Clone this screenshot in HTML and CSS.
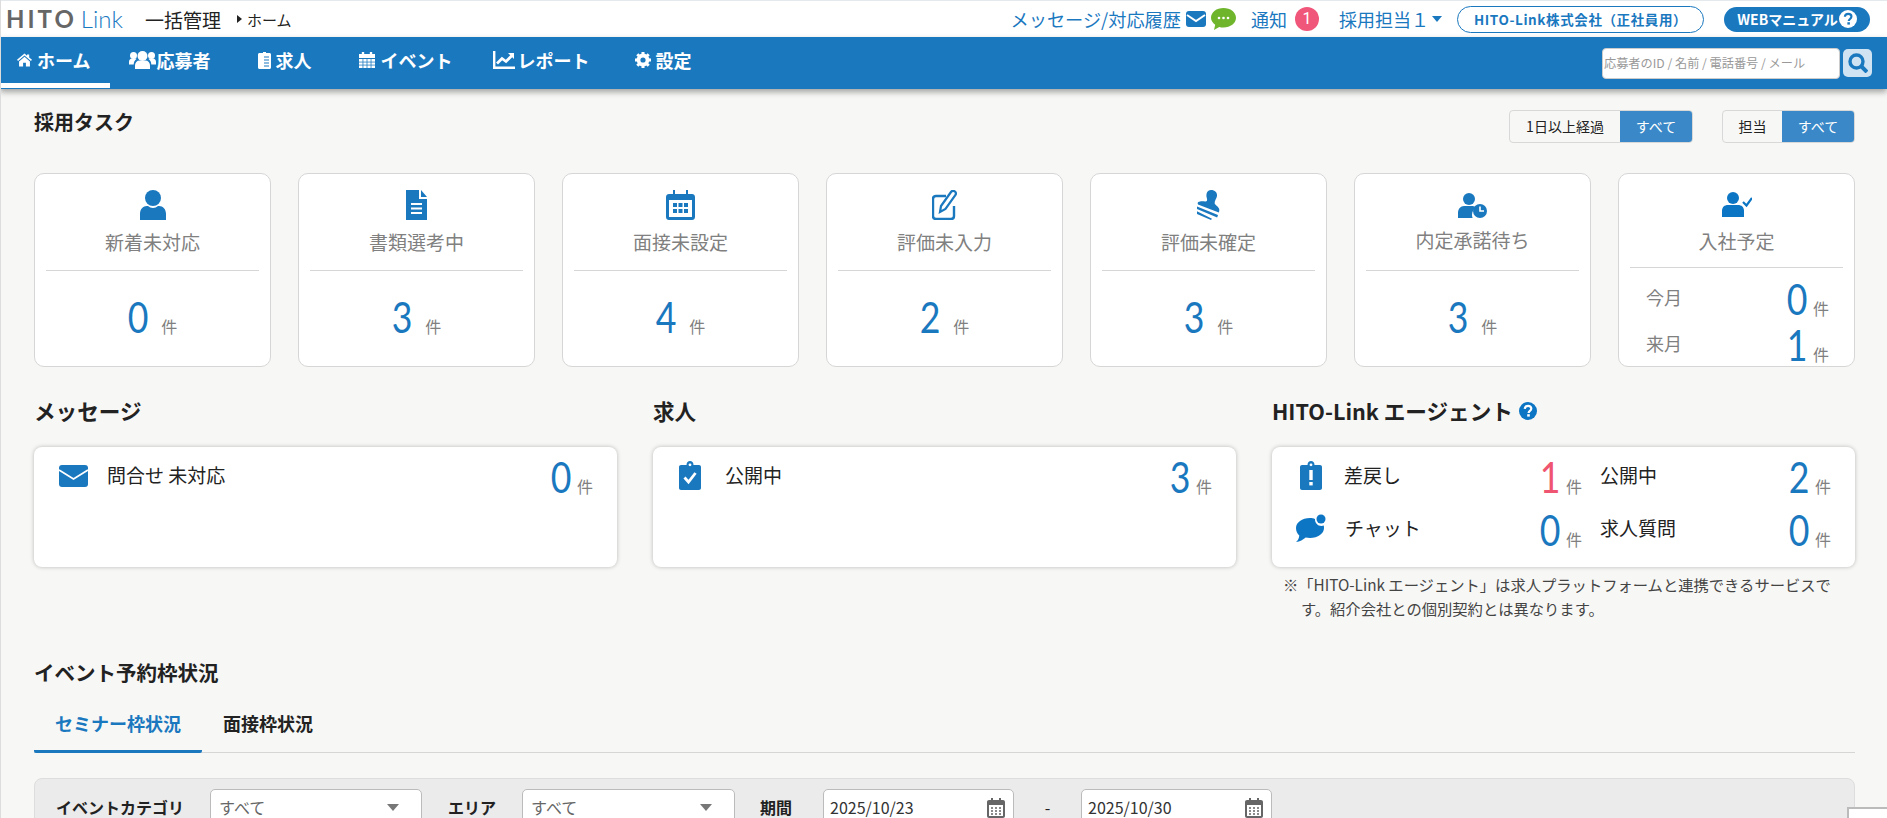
FILE: index.html
```html
<!DOCTYPE html>
<html lang="ja">
<head>
<meta charset="utf-8">
<title>HITO-Link</title>
<link rel="stylesheet" href="styles.css">
</head>
<body>
<header class="topbar">
  <div class="top-left">
    <div class="logo"><span class="logo-hito">HITO</span><span class="logo-link">Link</span></div>
    <div class="top-title">一括管理</div>
    <div class="crumb"><span class="crumb-caret"></span>ホーム</div>
  </div>
  <div class="top-right">
    <span class="top-link msg">メッセージ/対応履歴</span>
    <svg class="i-topmail" viewBox="0 0 20 16"><rect width="20" height="16" rx="3" fill="#1a78bf"/><path d="M1 4l9 6 9-6" fill="none" stroke="#fff" stroke-width="2"/></svg>
    <svg class="i-topchat" viewBox="0 0 25 22"><path d="M12.500 0C19.400 0 25 4.200 25 9.800S19.400 19.500 12.500 19.500c-1.500 0-3-.2-4.300-.6L3 22l1.200-5.300C1.600 15 0 12.600 0 9.800 0 4.200 5.600 0 12.500 0z" fill="#6fb52c"/><circle cx="8" cy="10" r="1.300" fill="#fff"/><circle cx="12.500" cy="10" r="1.300" fill="#fff"/><circle cx="17" cy="10" r="1.300" fill="#fff"/></svg>
    <span class="top-link notice">通知</span>
    <span class="badge">1</span>
    <span class="top-link user">採用担当１</span>
    <span class="user-caret"></span>
    <span class="company">HITO-Link株式会社（正社員用）</span>
    <span class="manual">WEBマニュアル<svg class="i-help" viewBox="0 0 20 20"><circle cx="10" cy="10" r="10" fill="#fff"/><path d="M6.500 7.500C6.700 5.500 8.200 4.300 10.200 4.300c2.100 0 3.600 1.200 3.600 3 0 2.700-3 2.600-3 5" fill="none" stroke="#1a78bf" stroke-width="2.400"/><rect x="9.300" y="13.600" width="2.800" height="2.600" fill="#1a78bf"/></svg></span>
  </div>
</header>

<nav class="nav">
  <div class="nav-items">
    <a class="nav-item active"><svg class="i-home" viewBox="0 0 16 14"><path d="M8 0L0 6.800l1.100 1.300L8 2.200l6.900 5.900L16 6.800l-3-2.500V1h-2.300v1.400zM2.200 8.500V14h4.300v-4h3v4h4.300V8.500L8 3.600z" fill="#fff"/></svg>ホーム</a>
    <a class="nav-item"><svg class="i-users" viewBox="0 0 27 18"><g fill="#fff"><circle cx="13.500" cy="5" r="5"/><path d="M6 18v-3.500C6 11.500 8 9.500 10.500 9.500h6c2.500 0 4.500 2 4.500 5V18z"/><circle cx="4.500" cy="4.500" r="3.500"/><circle cx="22.500" cy="4.500" r="3.500"/><path d="M0 13.500V11c0-2 1.200-3.500 3.200-3.500h3.300c.5 0 .8.200 1 .5C5.800 9 4.700 11 4.700 13.500zM27 13.500V11c0-2-1.200-3.500-3.200-3.500h-3.300c-.5 0-.8.200-1 .5 1.700 1 2.800 3 2.800 5.500z"/></g></svg><span class="nav-text">応募者</span></a>
    <a class="nav-item"><svg class="i-job" viewBox="0 0 13 17"><path d="M1.500 1H5V0h3v1h3.500c.8 0 1.500.7 1.500 1.500v13c0 .8-.7 1.500-1.500 1.500h-10C.7 17 0 16.300 0 15.500v-13C0 1.700.7 1 1.500 1z" fill="#fff"/><path d="M6 5h5M6 8h5M6 11h5M6 14h5" stroke="#1a78bf" stroke-width="1.200"/></svg>求人</a>
    <a class="nav-item"><svg class="i-event" viewBox="0 0 17 17"><path d="M3 0h2.500v2h6V0H14v2h3v4.500H0V2h3zM0 7.500h17V17H0z" fill="#fff"/><path d="M0 10.700h17M0 13.900h17M4.200 7.500V17M8.500 7.500V17M12.800 7.500V17" stroke="#1a78bf" stroke-width=".8"/></svg>イベント</a>
    <a class="nav-item nav-report"><svg class="i-report" viewBox="0 0 22 18"><path d="M1.200 0v16.800H22" fill="none" stroke="#fff" stroke-width="2.400"/><path d="M4 12.500l5-5 4 3 6-6" fill="none" stroke="#fff" stroke-width="2.800"/><path d="M15 2h6v6z" fill="#fff"/></svg>レポート</a>
    <a class="nav-item nav-settings"><svg class="i-gear" viewBox="0 0 16 16"><circle cx="8" cy="8" r="4.500" fill="none" stroke="#fff" stroke-width="3.800"/><path d="M8 0v3M8 13v3M0 8h3M13 8h3M2.300 2.300l2 2M11.700 11.700l2 2M13.700 2.300l-2 2M4.300 11.700l-2 2" stroke="#fff" stroke-width="3"/></svg>設定</a>
  </div>
  <div class="search">
    <input class="search-input" type="text" placeholder="応募者のID / 名前 / 電話番号 / メール">
    <span class="search-btn"><svg class="i-search" viewBox="0 0 20 20"><circle cx="8.500" cy="8.500" r="6.500" fill="none" stroke="#1a78bf" stroke-width="3.400"/><path d="M13 13l6 6" stroke="#1a78bf" stroke-width="4"/></svg></span>
  </div>
</nav>

<main class="main">
  <div class="task-head">
    <h2 class="h-task">採用タスク</h2>
    <div class="toggles">
      <div class="toggle"><span class="opt opt-a">1日以上経過</span><span class="opt on opt-b">すべて</span></div>
      <div class="toggle"><span class="opt opt-c">担当</span><span class="opt on opt-d">すべて</span></div>
    </div>
  </div>

  <div class="cards">
    <div class="card">
      <div class="card-icon"><svg class="ci ci-user" viewBox="0 0 26 30"><ellipse cx="13" cy="8" rx="8" ry="8" fill="#1a78bf"/><path d="M0 30v-6c0-5 3-8 7-8h1c1.500 1.300 3 2 5 2s3.500-.7 5-2h1c4 0 7 3 7 8v6z" fill="#1a78bf"/></svg></div>
      <div class="card-title">新着未対応</div>
      <div class="count"><span class="num">0</span><span class="unit">件</span></div>
    </div>
    <div class="card">
      <div class="card-icon"><svg class="ci ci-doc" viewBox="0 0 21 30"><path d="M0 0h13v9h8v21H0z" fill="#1a78bf"/><path d="M15 0l6 7h-6z" fill="#1a78bf"/><path d="M5 14h11M5 18.500h11M5 23h11" stroke="#fff" stroke-width="1.800"/></svg></div>
      <div class="card-title">書類選考中</div>
      <div class="count"><span class="num">3</span><span class="unit">件</span></div>
    </div>
    <div class="card">
      <div class="card-icon"><svg class="ci ci-cal" viewBox="0 0 29 30"><path d="M7 0h2v4h11V0h2v4h4c1.700 0 3 1.300 3 3v20c0 1.700-1.300 3-3 3H3c-1.700 0-3-1.300-3-3V7c0-1.700 1.300-3 3-3h4z" fill="#1a78bf"/><rect x="3" y="10" width="23" height="17" fill="#fff"/><g fill="#1a78bf"><rect x="7" y="13" width="4" height="4"/><rect x="12.500" y="13" width="4" height="4"/><rect x="18" y="13" width="4" height="4"/><rect x="7" y="19" width="4" height="4"/><rect x="12.500" y="19" width="4" height="4"/><rect x="18" y="19" width="4" height="4"/></g></svg></div>
      <div class="card-title">面接未設定</div>
      <div class="count"><span class="num">4</span><span class="unit">件</span></div>
    </div>
    <div class="card">
      <div class="card-icon"><svg class="ci ci-edit" viewBox="0 0 25 30"><path d="M14 6H4C2.300 6 1 7.300 1 9v17c0 1.700 1.300 3 3 3h15c1.700 0 3-1.300 3-3V16" fill="none" stroke="#1a78bf" stroke-width="2.400"/><path d="M8 22l1-6L19 2c1-1.300 2.500-1.500 3.700-.6 1.300 1 1.500 2.500.6 3.800L13.500 19z" fill="none" stroke="#1a78bf" stroke-width="2.200"/></svg></div>
      <div class="card-title">評価未入力</div>
      <div class="count"><span class="num">2</span><span class="unit">件</span></div>
    </div>
    <div class="card">
      <div class="card-icon"><svg class="ci ci-stamp" viewBox="0 0 23 30"><g fill="#1a78bf"><path d="M14 0c3.800 0 6.500 2.600 6 6-.4 2.800-2.800 5-2.300 7.500.3 1.600 3.300 2.500 4.300 5 .5 1.300.4 2.700-.2 4L1 14.500C.5 13.700.6 12.600 1.300 12c2-1.300 5-.8 7-.6 1.500.1 2.300-1 1.500-3.500C8.800 4 10 0 14 0z"/><path d="M0 16.500l21 8.600-.8 2.400L0 19zM0 21.300l15 7.500-1 1.200L0 24z"/></g></svg></div>
      <div class="card-title">評価未確定</div>
      <div class="count"><span class="num">3</span><span class="unit">件</span></div>
    </div>
    <div class="card">
      <div class="card-icon"><svg class="ci ci-uclock" viewBox="0 0 29 25"><g fill="#1a78bf"><circle cx="11" cy="6" r="6"/><path d="M0 25v-5c0-4 2.500-7 6-7h8c1.500 0 3 .5 4 1.500-2.500 1.800-4 4.500-4 7.500 0 1 .2 2.200.6 3z"/><circle cx="22" cy="18" r="7"/></g><path d="M22 13.500V18h4" fill="none" stroke="#fff" stroke-width="1.600"/></svg></div>
      <div class="card-title shift">内定承諾待ち</div>
      <div class="count"><span class="num">3</span><span class="unit">件</span></div>
    </div>
    <div class="card">
      <div class="card-icon"><svg class="ci ci-ucheck" viewBox="0 0 30 25"><g fill="#0c75c4"><ellipse cx="11" cy="6" rx="6" ry="6"/><path d="M0 25v-6c0-4 2.500-6 6-6h10c3.500 0 6 2 6 6v6z"/></g><path d="M21 10l3.500 3.500L30 6" fill="none" stroke="#0c75c4" stroke-width="2.200"/></svg></div>
      <div class="card-title">入社予定</div>
      <div class="month-rows">
        <div class="month"><span class="month-name">今月</span><span class="count-r"><span class="num">0</span><span class="unit tight">件</span></span></div>
        <div class="month"><span class="month-name">来月</span><span class="count-r"><span class="num">1</span><span class="unit tight">件</span></span></div>
      </div>
    </div>
  </div>

  <div class="columns">
    <section class="col">
      <h2 class="h-sec">メッセージ</h2>
      <div class="box">
        <div class="row">
          <svg class="bi bi-mail" viewBox="0 0 29 22"><rect width="29" height="22" rx="3" fill="#1a78bf"/><path d="M0 5l14.500 9L29 5" fill="none" stroke="#fff" stroke-width="1.800"/></svg>
          <span class="row-label">問合せ 未対応</span>
          <span class="count-r"><span class="num">0</span><span class="unit tight">件</span></span>
        </div>
      </div>
    </section>
    <section class="col">
      <h2 class="h-sec">求人</h2>
      <div class="box">
        <div class="row">
          <svg class="bi bi-clip" viewBox="0 0 22 29"><path d="M2 4h5.500C7.500 1.500 9 0 11 0s3.500 1.500 3.500 4H20c1.100 0 2 .9 2 2v21c0 1.100-.9 2-2 2H2c-1.100 0-2-.9-2-2V6c0-1.100.9-2 2-2z" fill="#1a78bf"/><circle cx="11" cy="3.800" r="1.400" fill="#fff"/><path d="M5.500 16.500l4 4.500 7-9" fill="none" stroke="#fff" stroke-width="2.800"/></svg>
          <span class="row-label">公開中</span>
          <span class="count-r"><span class="num">3</span><span class="unit tight">件</span></span>
        </div>
      </div>
    </section>
    <section class="col">
      <h2 class="h-sec">HITO-Link エージェント<svg class="i-q" viewBox="0 0 18 18"><circle cx="9" cy="9" r="9" fill="#0c75c4"/><path d="M5.700 6.800C5.900 5 7.300 3.900 9.100 3.900c1.900 0 3.200 1.100 3.200 2.700 0 2.400-2.700 2.300-2.700 4.500" fill="none" stroke="#fff" stroke-width="2.200"/><rect x="8.200" y="12.200" width="2.600" height="2.400" fill="#fff"/></svg></h2>
      <div class="box box-agent">
        <div class="agent-grid">
          <div class="row a-left">
            <svg class="bi bi-clip" viewBox="0 0 22 29"><path d="M2 4h5.500C7.500 1.500 9 0 11 0s3.500 1.500 3.500 4H20c1.100 0 2 .9 2 2v21c0 1.100-.9 2-2 2H2c-1.100 0-2-.9-2-2V6c0-1.100.9-2 2-2z" fill="#1a78bf"/><circle cx="11" cy="3.800" r="1.400" fill="#fff"/><rect x="9.300" y="9" width="3.400" height="10" fill="#fff"/><rect x="9.300" y="21" width="3.400" height="3.400" fill="#fff"/></svg>
            <span class="row-label">差戻し</span>
            <span class="count-r"><span class="num pink">1</span><span class="unit tight">件</span></span>
          </div>
          <div class="row a-right">
            <span class="row-label flush">公開中</span>
            <span class="count-r"><span class="num">2</span><span class="unit tight">件</span></span>
          </div>
          <div class="row a-left">
            <svg class="bi bi-bubble" viewBox="0 0 30 28"><path d="M14 4c2 0 3.500.3 5 1-.3 3.500 2.500 7 6.500 7 .8 0 1.500-.1 2.200-.4.300 1 .3 1.600.3 2.400 0 5.500-6 10-14 10-1.500 0-3-.2-4.300-.5C7 25.800 4 27.500 0 28c2-1.500 3-3.500 3.300-6.500C1.200 19.500 0 17 0 14 0 8.500 6 4 14 4z" fill="#0c75c4"/><circle cx="25" cy="5" r="4.500" fill="#0c75c4"/></svg>
            <span class="row-label">チャット</span>
            <span class="count-r"><span class="num">0</span><span class="unit tight">件</span></span>
          </div>
          <div class="row a-right">
            <span class="row-label flush">求人質問</span>
            <span class="count-r"><span class="num">0</span><span class="unit tight">件</span></span>
          </div>
        </div>
      </div>
      <p class="note">※「HITO-Link エージェント」は求人プラットフォームと連携できるサービスです。紹介会社との個別契約とは異なります。</p>
    </section>
  </div>

  <section class="event">
    <h2 class="h-event">イベント予約枠状況</h2>
    <div class="tabs">
      <span class="tab active">セミナー枠状況</span>
      <span class="tab">面接枠状況</span>
    </div>
    <div class="filter">
      <span class="f-label l-cat">イベントカテゴリ</span>
      <span class="field f-sel1">すべて<span class="sel-caret"></span></span>
      <span class="f-label l-area">エリア</span>
      <span class="field f-sel2">すべて<span class="sel-caret"></span></span>
      <span class="f-label l-period">期間</span>
      <span class="field f-date d1">2025/10/23<svg class="i-cal" viewBox="0 0 18 20"><path d="M4 0h2v2h6V0h2v2h2c1.100 0 2 .9 2 2v14c0 1.100-.9 2-2 2H2c-1.100 0-2-.9-2-2V4c0-1.100.9-2 2-2h2z" fill="#666"/><rect x="2" y="7" width="14" height="11" fill="#fff"/><path d="M4 10h2M8 10h2M12 10h2M4 13h2M8 13h2M12 13h2M4 16h2M8 16h2M12 16h2" stroke="#666" stroke-width="1.600"/></svg></span>
      <span class="dash">-</span>
      <span class="field f-date d2">2025/10/30<svg class="i-cal" viewBox="0 0 18 20"><path d="M4 0h2v2h6V0h2v2h2c1.100 0 2 .9 2 2v14c0 1.100-.9 2-2 2H2c-1.100 0-2-.9-2-2V4c0-1.100.9-2 2-2h2z" fill="#666"/><rect x="2" y="7" width="14" height="11" fill="#fff"/><path d="M4 10h2M8 10h2M12 10h2M4 13h2M8 13h2M12 13h2M4 16h2M8 16h2M12 16h2" stroke="#666" stroke-width="1.600"/></svg></span>
    </div>
  </section>
</main>
<div class="corner-box"></div>
</body>
</html>
```

FILE: styles.css
```css
* { box-sizing: border-box; }
html, body { margin: 0; height: 100%; overflow: hidden; }
body {
  background: #f7f7f5;
  color: #222;
  font-family: "Noto Sans CJK JP", "Noto Sans", sans-serif;
  border-left: 1px solid #ddd;
}
h2 { margin: 0; font-weight: 700; color: #222; }
svg { display: block; flex: none; }

/* top bar */
.topbar {
  height: 37px;
  background: #fff;
  border-top: 1px solid #e4e9ee;
  margin-left: -1px;
  display: flex;
  justify-content: space-between;
  align-items: center;
  padding: 0 17px 0 6px;
}
.top-left, .top-right { display: flex; align-items: center; }
.logo { font-family: Lato, sans-serif; line-height: 30px; width: 139px; white-space: nowrap; display: flex; align-items: baseline; gap: 4px; }
.logo-hito { color: #666; font-size: 24px; font-weight: 700; letter-spacing: 3px; }
.logo-link { color: #1a78bf; font-weight: 300; font-size: 24px; letter-spacing: 0; }
.top-title { font-size: 19px; width: 92px; color: #222; }
.crumb { display: flex; align-items: center; font-size: 15px; color: #222; }
.crumb-caret { width: 0; height: 0; border-left: 5px solid #222; border-top: 4px solid transparent; border-bottom: 4px solid transparent; margin-right: 5px; }
.top-link { font-size: 18px; color: #1a78bf; white-space: nowrap; }
.msg { font-size: 18.200px; }
.i-topmail { width: 20px; height: 16px; margin-left: 5px; }
.i-topchat { width: 25px; height: 22px; margin-left: 5px; }
.notice { margin-left: 15px; }
.badge { width: 24px; height: 24px; border-radius: 12px; background: #f0567a; color: #fff; font-size: 16px; line-height: 24px; text-align: center; margin-left: 8px; font-family: Roboto, sans-serif; }
.user { margin-left: 20px; }
.user-caret { width: 0; height: 0; border-top: 6px solid #1a78bf; border-left: 5px solid transparent; border-right: 5px solid transparent; margin-left: 3px; }
.company { margin-left: 15px; width: 247px; height: 27px; border: 1px solid #1a78bf; border-radius: 14px; color: #1a78bf; font-size: 13.500px; font-weight: 700; line-height: 24px; text-align: center; white-space: nowrap; letter-spacing: .6px; }
.manual { margin-left: 20px; width: 146px; height: 25px; border-radius: 13px; background: #1a78bf; color: #fff; font-size: 14px; font-weight: 700; display: flex; align-items: center; justify-content: center; white-space: nowrap; }
.i-help { width: 18px; height: 18px; margin-left: 1px; }

/* nav */
.nav {
  height: 52px;
  margin-left: -1px;
  background: #1a78bf;
  box-shadow: 0 3px 6px rgba(0,0,0,.35);
  display: flex;
  justify-content: space-between;
  align-items: center;
  padding-right: 15px;
  position: relative;
}
.nav-items { display: flex; height: 100%; }
.nav-item { display: flex; align-items: center; gap: 5px; padding: 2px 24px 2px; color: #fff; font-size: 18px; font-weight: 700; white-space: nowrap; border-bottom: 5px solid transparent; height: 51px; }
.nav-item.active { padding: 2px 20px 2px 17px; margin-right: -5px; border-bottom-color: #fff; }
.nav-report { margin-left: -7px; gap: 2px; }
.nav-settings { margin-left: -2px; gap: 4px; }
.nav-text { margin-left: -5px; }
.i-home { width: 15px; height: 14px; }
.i-users { width: 27px; height: 18px; }
.i-job { width: 13px; height: 17px; margin-right: -1px; }
.i-event { width: 16px; height: 16px; }
.i-report { width: 22px; height: 18px; }
.i-gear { width: 16px; height: 16px; }
.search { display: flex; align-items: center; gap: 3px; }
.search-input { width: 238px; height: 31px; border: 1px solid #ccc; border-radius: 4px; background: #fff; font-family: inherit; font-size: 12.200px; padding: 0 1px; outline: none; }
.search-input::placeholder { color: #999; opacity: 1; }
.search-btn { width: 29px; height: 28px; border-radius: 5px; background: #cfe3f3; display: flex; align-items: center; justify-content: center; }
.i-search { width: 20px; height: 20px; }

/* main */
.main { padding: 21px 32px 0 33px; }
.task-head { display: flex; justify-content: space-between; align-items: flex-start; height: 63px; }
.h-task { font-size: 20px; line-height: 24px; }
.toggles { display: flex; gap: 29px; }
.toggle { display: flex; height: 33px; border: 1px solid #d8d8d8; border-radius: 4px; overflow: hidden; background: #f7f7f5; }
.opt { font-size: 14px; line-height: 31px; text-align: center; color: #222; }
.opt.on { background: #3a88c7; color: #fff; }
.opt-a { width: 110px; }
.opt-b { width: 72px; }
.opt-c { width: 59px; }
.opt-d { width: 72px; }

/* task cards */
.cards { display: flex; justify-content: space-between; }
.card { width: 237px; height: 194px; background: #fff; border: 1px solid #d6d6d6; border-radius: 10px; padding: 16px 11px 0; display: flex; flex-direction: column; }
.card-icon { height: 30px; display: flex; justify-content: center; align-items: center; }
.ci { height: auto; }
.ci-user { width: 26px; }
.ci-doc { width: 21px; }
.ci-cal { width: 29px; }
.ci-edit { width: 25px; }
.ci-stamp { width: 23px; }
.ci-uclock { width: 29px; }
.ci-ucheck { width: 30px; }
.card-title { height: 51px; border-bottom: 1px solid #d6d6d6; font-size: 19px; line-height: 43px; text-align: center; color: #808080; }
.card-title.shift { line-height: 39px; }
.count { flex: 1; display: flex; justify-content: center; align-items: baseline; padding-top: 25px; gap: 13px; }
.num { display: inline-block; font-family: Lato, sans-serif; font-size: 42px; line-height: 42px; color: #1a78bf; transform: scaleX(.85); margin: 0 -2px; }
.num.pink { color: #ef5470; }
.unit { font-size: 16px; line-height: 20px; color: #808080; }
.unit.tight { margin-left: 6px; }
.month-rows { padding: 6px 14px 0 16px; }
.month { display: flex; justify-content: space-between; align-items: center; height: 46px; }
.month-name { font-size: 18px; color: #808080; }
.count-r { display: flex; align-items: baseline; }
.month .count-r { margin-top: 3px; }

/* columns */
.columns { display: flex; gap: 36px; margin-top: 30px; }
.col { flex: 1; min-width: 0; }
.h-sec { font-size: 21.600px; line-height: 28px; height: 50px; display: flex; align-items: flex-start; white-space: nowrap; }
.i-q { width: 18px; height: 18px; margin: 5px 0 0 6px; }
.box { height: 120px; background: #fff; border-radius: 8px; box-shadow: 0 0 4px rgba(0,0,0,.25); padding: 8px 24px 0 25px; }
.row { display: flex; align-items: flex-start; height: 53px; color: #222; }
.bi-mail { width: 29px; height: 22px; margin-top: 10px; }
.bi-clip { width: 22px; height: 29px; margin: 6px 5px 0 1px; }
.bi-bubble { width: 30px; height: 28px; margin: 6px 0 0 -4px; }
.row-label { flex: 1; font-size: 19px; line-height: 26px; margin: 7px 0 0 19px; white-space: nowrap; }
.row-label.flush { margin-left: 0; }
.row .count-r { line-height: 42px; margin-top: 1px; }
.agent-grid { display: grid; grid-template-columns: 282px 1fr; column-gap: 18px; }
.box-agent { padding-left: 28px; }
.a-left .bi-clip { margin: 6px 3px 0 0; }
.note { margin: 5px 15px 0 11px; font-size: 15.300px; line-height: 24px; color: #444; text-indent: -18px; padding-left: 18px; }

/* event */
.event { margin-top: 37px; }
.h-event { font-size: 20.500px; line-height: 30px; }
.tabs { display: flex; margin-top: 22px; height: 44px; border-bottom: 1px solid #d6d6d6; }
.tab { font-size: 18px; font-weight: 700; line-height: 28px; height: 44px; padding: 0 0 0 21px; width: 180px; white-space: nowrap; }
.tab.active { color: #1a78bf; width: 168px; padding-left: 21px; border-bottom: 3px solid #1a78bf; border-radius: 0 0 2px 2px; }
.filter { margin-top: 25px; height: 110px; background: #ebebeb; border: 1px solid #ddd; border-radius: 8px; padding: 10px 23px 0 21px; display: flex; align-items: flex-start; }
.f-label { font-size: 16px; font-weight: 700; line-height: 36px; white-space: nowrap; }
.l-cat { width: 154px; }
.l-area { width: 74px; margin-left: 26px; }
.l-period { width: 63px; margin-left: 25px; }
.field { height: 44px; background: #fff; border: 1px solid #bbb; border-radius: 5px; font-size: 16px; line-height: 34px; padding: 0 8px; display: flex; justify-content: space-between; white-space: nowrap; }
.f-sel1 { width: 212px; color: #666; }
.f-sel2 { width: 213px; color: #666; }
.f-date { width: 191px; padding-left: 6px; color: #333; }
.sel-caret { width: 0; height: 0; border-top: 7px solid #777; border-left: 6px solid transparent; border-right: 6px solid transparent; margin: 14px 14px 0 0; }
.i-cal { width: 18px; height: 20px; margin-top: 8px; }
.dash { width: 67px; text-align: center; font-size: 16px; line-height: 36px; }
.corner-box { position: fixed; left: 1847px; top: 807px; width: 60px; height: 30px; background: #fff; border: 2px solid #bbb; }
```
